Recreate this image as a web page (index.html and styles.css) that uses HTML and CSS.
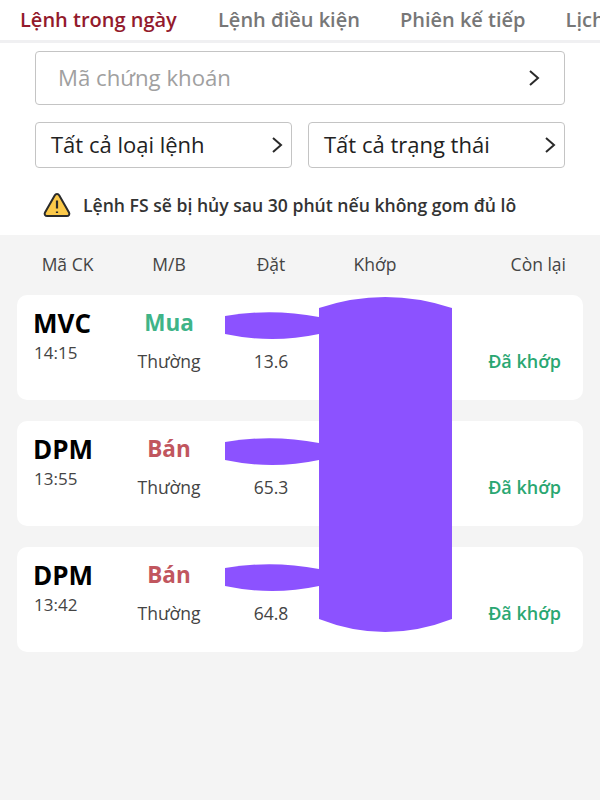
FILE: index.html
```html
<!DOCTYPE html>
<html lang="vi">
<head>
    <meta charset="UTF-8">
    <meta name="viewport" content="width=device-width, initial-scale=1.0">
    <title>Sổ lệnh</title>
    <link rel="stylesheet" href="styles.css">
</head>
<body>
    <div class="tabs">
        <div class="tab active">Lệnh trong ngày</div>
        <div class="tab">Lệnh điều kiện</div>
        <div class="tab">Phiên kế tiếp</div>
        <div class="tab">Lịch sử</div>
    </div>

    <div class="filters">
        <div class="select select-code">
            <span class="placeholder">Mã chứng khoán</span>
            <svg class="chevron" viewBox="0 0 12 18"><path d="M2 2l8 7-8 7"/></svg>
        </div>
        <div class="select-row">
            <div class="select">
                <span>Tất cả loại lệnh</span>
                <svg class="chevron" viewBox="0 0 12 18"><path d="M2 2l8 7-8 7"/></svg>
            </div>
            <div class="select">
                <span>Tất cả trạng thái</span>
                <svg class="chevron" viewBox="0 0 12 18"><path d="M2 2l8 7-8 7"/></svg>
            </div>
        </div>
    </div>

    <div class="notice">
        <svg class="warn-icon" viewBox="0 0 28 26">
            <path class="warn-fill" d="M14 2c-1 0-1.800.5-2.300 1.400L2 20.500c-1 1.800.2 3.500 2.200 3.500h19.600c2 0 3.200-1.700 2.200-3.500L16.300 3.400C15.800 2.500 15 2 14 2z"/>
            <path class="warn-mark" d="M14 8.500v8M14 19.500v1.500"/>
        </svg>
        <span>Lệnh FS sẽ bị hủy sau 30 phút nếu không gom đủ lô</span>
    </div>

    <div class="orders">
        <div class="order-head">
            <div>Mã CK</div>
            <div>M/B</div>
            <div>Đặt</div>
            <div>Khớp</div>
            <div class="head-remain">Còn lại</div>
        </div>

        <div class="order-list">
            <div class="card">
                <div class="col-code"><div class="code">MVC</div><div class="time">14:15</div></div>
                <div class="col-side"><div class="side buy">Mua</div><div class="type">Thường</div></div>
                <div class="col-price">13.6</div>
                <div class="col-match"></div>
                <div class="col-status">Đã khớp</div>
                <svg class="blob" viewBox="0 0 94 28"><path d="M0 4Q47 -4 94 5V22Q47 32 0 22Z"/></svg>
            </div>
            <div class="card">
                <div class="col-code"><div class="code">DPM</div><div class="time">13:55</div></div>
                <div class="col-side"><div class="side sell">Bán</div><div class="type">Thường</div></div>
                <div class="col-price">65.3</div>
                <div class="col-match"></div>
                <div class="col-status">Đã khớp</div>
                <svg class="blob" viewBox="0 0 94 28"><path d="M0 4Q47 -4 94 5V22Q47 32 0 22Z"/></svg>
            </div>
            <div class="card">
                <div class="col-code"><div class="code">DPM</div><div class="time">13:42</div></div>
                <div class="col-side"><div class="side sell">Bán</div><div class="type">Thường</div></div>
                <div class="col-price">64.8</div>
                <div class="col-match"></div>
                <div class="col-status">Đã khớp</div>
                <svg class="blob" viewBox="0 0 94 28"><path d="M0 4Q47 -4 94 5V22Q47 32 0 22Z"/></svg>
            </div>

            <svg class="blob-tall" viewBox="0 0 133 336"><path d="M0 11Q66 -11 133 11V322Q66 348 0 322Z"/></svg>
        </div>
    </div>
</body>
</html>
```

FILE: styles.css
```css
* {
    box-sizing: border-box;
}

html, body {
    height: 100%;
}

body {
    margin: 0;
    display: flex;
    flex-direction: column;
    overflow: hidden;
    background-color: #fff;
    font-family: "Open Sans", "Noto Sans", sans-serif;
    color: #222;
}

/* tabs */
.tabs {
    display: flex;
    height: 43px;
    flex-shrink: 0;
    border-bottom: 3px solid #f0f0f2;
    white-space: nowrap;
    overflow: hidden;
}

.tab {
    flex-shrink: 0;
    height: 43px;
    padding: 6px 20px 0;
    font-size: 20px;
    font-weight: 600;
    color: #777;
}

.tab.active {
    width: 198px;
    color: #931a2c;
    border-bottom: 3px solid #931a2c;
}

/* filters */
.filters {
    display: flex;
    flex-direction: column;
    gap: 17px;
    padding: 8px 35px 0;
}

.select-row {
    display: flex;
    gap: 16px;
}

.select {
    flex: 1;
    display: flex;
    align-items: center;
    justify-content: space-between;
    height: 46px;
    padding: 0 8px 0 15px;
    border: 1px solid #c4c4c4;
    border-radius: 4px;
    font-size: 22px;
    line-height: 44px;
    color: #222;
}

.select-code {
    flex: none;
    height: 54px;
    padding: 0 24px 0 22px;
    font-size: 22.200px;
}

.select span {
    margin-top: -2px;
}

.select .placeholder {
    margin-top: 0;
    color: #a0a0a0;
}

.chevron {
    width: 12px;
    height: 18px;
    fill: none;
    stroke: #2a2a2a;
    stroke-width: 2;
}

/* warning line */
.notice {
    display: flex;
    align-items: center;
    gap: 12px;
    height: 67px;
    padding: 6px 0 0 43px;
    font-size: 17.600px;
    font-weight: 600;
    color: #333;
}

.warn-icon {
    width: 28px;
    height: 26px;
}

.warn-fill {
    fill: #fbc94a;
    stroke: #2b2b2b;
    stroke-width: 2;
}

.warn-mark {
    fill: none;
    stroke: #2b2b2b;
    stroke-width: 2.200;
}

/* order table */
.orders {
    flex: 1;
    padding: 0 17px;
    background-color: #f4f4f4;
}

.order-head {
    display: grid;
    grid-template-columns: 101px 102px 102px 106px 138px;
    height: 60px;
    padding-top: 17px;
    font-size: 17.500px;
    color: #444;
    text-align: center;
}

.head-remain {
    text-align: right;
}

.order-list {
    position: relative;
    display: flex;
    flex-direction: column;
    gap: 21px;
}

.card {
    position: relative;
    display: grid;
    grid-template-columns: 101px 102px 102px 106px 133px;
    height: 105px;
    padding-top: 11px;
    background-color: #fff;
    border-radius: 10px;
}

.col-code {
    padding-left: 17px;
}

.code {
    margin-left: -1px;
    font-size: 26px;
    font-weight: 700;
    line-height: 34px;
    color: #000;
}

.time {
    margin-top: 1px;
    font-size: 17px;
    line-height: 24px;
    color: #444;
}

.col-side {
    text-align: center;
}

.side {
    font-size: 22.500px;
    font-weight: 700;
    line-height: 34px;
}

.side.buy {
    color: #3fb488;
}

.side.sell {
    color: #c1565e;
}

.type {
    margin-top: 9px;
    font-size: 17.500px;
    line-height: 24px;
    color: #444;
}

.col-price {
    padding-top: 43px;
    font-size: 17.500px;
    line-height: 24px;
    color: #444;
    text-align: center;
}

.col-status {
    padding-top: 43px;
    font-size: 18px;
    font-weight: 600;
    line-height: 24px;
    color: #2aa772;
    text-align: right;
}

/* purple marks lying over the values */
.blob {
    position: absolute;
    left: 208px;
    top: 17px;
    width: 94px;
    height: 28px;
    fill: #8c52ff;
}

.blob-tall {
    position: absolute;
    left: 302px;
    top: 2px;
    width: 133px;
    height: 336px;
    fill: #8c52ff;
}
```
